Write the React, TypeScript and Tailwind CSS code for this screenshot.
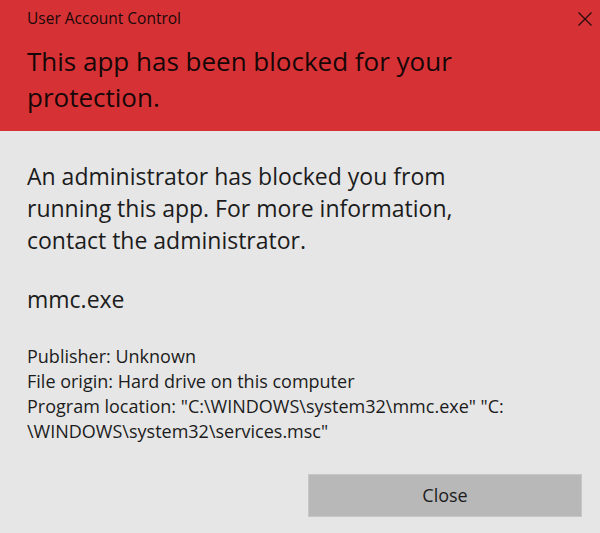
const DETAILS = [
  'Publisher: Unknown',
  'File origin: Hard drive on this computer',
  'Program location: "C:\\WINDOWS\\system32\\mmc.exe" "C:',
  '\\WINDOWS\\system32\\services.msc"',
];

export default function App() {
  return (
    <div
      className="w-[600px] h-[533px] bg-[#e6e6e6] flex flex-col text-[#1c1c1c]"
      style={{ fontFamily: '"Open Sans", "Noto Sans", sans-serif' }}
    >
      {/* red banner */}
      <div className="h-[131px] bg-[#d63236] pl-[27px] pr-[8px] pt-[8px] flex flex-col">
        <div className="flex items-start justify-between">
          <span className="text-[15.5px] leading-[20px] text-[#1a0808]">User Account Control</span>
          <svg className="mt-[4px]" width="14" height="14" viewBox="0 0 14 14" fill="none">
            <path d="M0.5 0.5 L13.5 13.5 M13.5 0.5 L0.5 13.5" stroke="#2a0c0c" strokeWidth="1.3" />
          </svg>
        </div>
        <div className="mt-[15px] text-[26px] leading-[36px] text-[#160606] w-[440px]">
          This app has been blocked for your protection.
        </div>
      </div>

      {/* body */}
      <div className="pl-[27px] pr-[18px] pt-[29px] flex flex-col">
        <div className="text-[23px] leading-[32px] w-[462px]">
          An administrator has blocked you from running this app. For more information, contact the administrator.
        </div>
        <div className="mt-[27px] text-[23px] leading-[32px]">mmc.exe</div>
        <div className="mt-[29px] flex flex-col text-[18px] leading-[25px]">
          {DETAILS.map(line => (
            <div key={line}>{line}</div>
          ))}
        </div>
        <div className="mt-[30px] flex justify-end">
          <button className="w-[274px] h-[43px] bg-[#b8b8b8] border border-[#c6c6c6] text-[18px] text-[#1c1c1c]">
            Close
          </button>
        </div>
      </div>
    </div>
  );
}
